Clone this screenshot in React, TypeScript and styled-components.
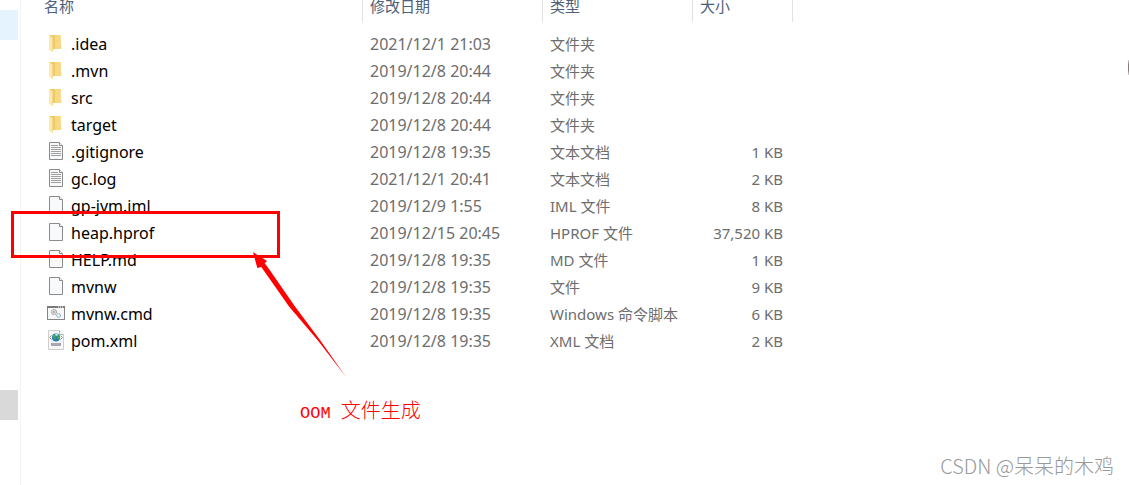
import React from "react";
import styled, { createGlobalStyle } from "styled-components";

const GlobalStyle = createGlobalStyle`
  * { box-sizing: border-box; }
  body {
    margin: 0;
    background: #fff;
    font-family: "Noto Sans", "Noto Sans CJK SC", sans-serif;
    overflow: hidden;
  }
`;

const Page = styled.div`
  position: relative;
  display: flex;
  min-height: 100vh;
`;

const Sidebar = styled.nav`
  display: flex;
  flex-direction: column;
  flex: none;
  gap: 350px;
  width: 21px;
  padding: 10px 2px 0 0;
  border-right: 1px solid #f3f3f3;
`;

const SideItem = styled.div<{ $tone: string }>`
  height: 30px;
  background: ${(p) => p.$tone};
`;

const Main = styled.main`
  flex: 1;
`;

const Table = styled.table`
  width: 772px;
  table-layout: fixed;
  border-collapse: separate;
  border-spacing: 0;
`;

const HeadCell = styled.th<{ $width: number; $indent?: number }>`
  width: ${(p) => p.$width}px;
  height: 22px;
  padding: 0 0 8px ${(p) => p.$indent ?? 7}px;
  border-right: 1px solid #e2e2e2;
  color: #4c607a;
  font-size: 15px;
  font-weight: 400;
  line-height: 12px;
  text-align: left;
  vertical-align: top;
`;

const Body = styled.tbody`
  &::before {
    content: "";
    display: block;
    height: 9px;
  }
`;

const Cell = styled.td`
  height: 27px;
  padding: 0 0 0 7px;
  color: #6d6d6d;
  font-size: 15px;
  line-height: 27px;
  white-space: nowrap;
`;

const NameCell = styled(Cell)`
  padding-left: 26px;
  color: #000;
  font-size: 16px;
`;

const DateCell = styled(Cell)`
  font-size: 16px;
`;

const SizeCell = styled(Cell)`
  padding-right: 10px;
  text-align: right;
`;

const FileLabel = styled.div`
  display: flex;
  align-items: center;
  gap: 6px;
  height: 27px;
`;

const Icon = styled.svg`
  flex: none;
  display: block;
  width: 18px;
  height: 23px;
`;

const Highlight = styled.div`
  position: absolute;
  left: 11px;
  top: 211px;
  width: 269px;
  height: 47px;
  border: 3px solid #f00;
`;

const Arrow = styled.svg`
  position: absolute;
  left: 250px;
  top: 250px;
  width: 100px;
  height: 130px;
`;

const Note = styled.div`
  position: absolute;
  left: 300px;
  top: 399px;
  color: #f00;
  font-family: "Liberation Mono", "Noto Sans CJK SC", monospace;
  font-size: 17px;
  font-weight: 300;
  line-height: 28px;
  white-space: pre;
`;

const NoteHan = styled.span`
  font-size: 20px;
`;

const Watermark = styled.div`
  position: absolute;
  right: 15px;
  bottom: 5px;
  color: #999;
  font-family: "Noto Sans CJK SC", sans-serif;
  font-size: 20px;
  font-weight: 300;
  line-height: 28px;
`;

const EdgeHandle = styled.div`
  position: absolute;
  right: 0;
  top: 60px;
  width: 1px;
  height: 15px;
  background: linear-gradient(#d8d4d4, #857b7b 30%, #857b7b 70%, #d8d4d4);
`;

type Kind = "folder" | "text" | "blank" | "script" | "xml";

function FileIcon({ kind }: { kind: Kind }) {
  if (kind === "folder") {
    return (
      <Icon viewBox="0 0 18 23" aria-hidden="true">
        <path d="M2.500 2h11v10.500h.7V16H5z" fill="#efc964" />
        <path d="M8 2h5.500v10.500h.7V16H8z" fill="#f7d983" />
        <path d="M2 2.200l4 2.300V19l-4-2z" fill="#fde9ab" />
        <path d="M5.500 4.500V18.500" stroke="#f5d88c" />
      </Icon>
    );
  }
  if (kind === "script") {
    return (
      <Icon viewBox="0 0 18 23" aria-hidden="true">
        <rect x=".5" y="3.500" width="17" height="13" fill="#f6f7f8" stroke="#868686" />
        <path d="M0 4h18" stroke="#7b7b7b" strokeWidth="2" />
        <path d="M11 4h1m1 0h1m1 0h1" stroke="#fff" />
        <circle cx="7" cy="9" r="2.600" fill="#ddd" stroke="#888" strokeDasharray="1.200 .6" />
        <circle cx="7" cy="9" r=".8" fill="#777" />
        <circle cx="11.500" cy="12.500" r="2" fill="#e0f0f7" stroke="#7d9fb0" strokeDasharray="1.200 .5" />
      </Icon>
    );
  }
  if (kind === "xml") {
    return (
      <Icon viewBox="0 0 18 23" aria-hidden="true">
        <path d="M1.500.5h11l4 4v15h-15z" fill="#f6f6f6" stroke="#cfcfcf" />
        <path d="M12.500.5v4h4" fill="#fff" stroke="#b5b5b5" />
        <circle cx="9" cy="7.500" r="4" fill="#2b78b9" />
        <path d="M6 5l3-1 1 2-2 1 1 3-2-1-1-2zM11 4l2 3-1 3-2-2z" fill="#3fab51" />
        <path d="M9 3.500l2 1-1 1.500-2-1z" fill="#c9efff" />
        <path d="M4.500 5.500l-2 2 2 2M13.500 5.500l2 2-2 2" fill="none" stroke="#8794a0" />
        <path d="M4 14.500h10" stroke="#a6a6b4" strokeWidth="3" />
      </Icon>
    );
  }
  return (
    <Icon viewBox="0 0 18 23" aria-hidden="true">
      <path d="M2.500 1.500h10l3 3v14h-13z" fill="#f8f9fa" stroke="#8b8b8b" />
      <path d="M12.500 1.500v3h3" fill="#fff" stroke="#8b8b8b" />
      {kind === "text" && (
        <path d="M4 4.500h7M4 6.500h10M4 8.500h10M4 10.500h10M4 12.500h10M4 14.500h10" stroke="#a0a0a0" />
      )}
    </Icon>
  );
}

const files: { name: string; kind: Kind; date: string; type: string; size: string }[] = [
  { name: ".idea", kind: "folder", date: "2021/12/1 21:03", type: "文件夹", size: "" },
  { name: ".mvn", kind: "folder", date: "2019/12/8 20:44", type: "文件夹", size: "" },
  { name: "src", kind: "folder", date: "2019/12/8 20:44", type: "文件夹", size: "" },
  { name: "target", kind: "folder", date: "2019/12/8 20:44", type: "文件夹", size: "" },
  { name: ".gitignore", kind: "text", date: "2019/12/8 19:35", type: "文本文档", size: "1 KB" },
  { name: "gc.log", kind: "text", date: "2021/12/1 20:41", type: "文本文档", size: "2 KB" },
  { name: "gp-jvm.iml", kind: "blank", date: "2019/12/9 1:55", type: "IML 文件", size: "8 KB" },
  { name: "heap.hprof", kind: "blank", date: "2019/12/15 20:45", type: "HPROF 文件", size: "37,520 KB" },
  { name: "HELP.md", kind: "blank", date: "2019/12/8 19:35", type: "MD 文件", size: "1 KB" },
  { name: "mvnw", kind: "blank", date: "2019/12/8 19:35", type: "文件", size: "9 KB" },
  { name: "mvnw.cmd", kind: "script", date: "2019/12/8 19:35", type: "Windows 命令脚本", size: "6 KB" },
  { name: "pom.xml", kind: "xml", date: "2019/12/8 19:35", type: "XML 文档", size: "2 KB" },
];

export default function App() {
  return (
    <>
      <GlobalStyle />
      <Page>
        <Sidebar>
          <SideItem $tone="#e5f3ff" />
          <SideItem $tone="#d9d9d9" />
        </Sidebar>
        <Main>
          <Table>
            <thead>
              <tr>
                <HeadCell $width={342} $indent={23}>名称</HeadCell>
                <HeadCell $width={180}>修改日期</HeadCell>
                <HeadCell $width={150}>类型</HeadCell>
                <HeadCell $width={100}>大小</HeadCell>
              </tr>
            </thead>
            <Body>
              {files.map((f) => (
                <tr key={f.name}>
                  <NameCell>
                    <FileLabel>
                      <FileIcon kind={f.kind} />
                      {f.name}
                    </FileLabel>
                  </NameCell>
                  <DateCell>{f.date}</DateCell>
                  <Cell>{f.type}</Cell>
                  <SizeCell>{f.size}</SizeCell>
                </tr>
              ))}
            </Body>
          </Table>
        </Main>
        <Highlight />
        <Arrow viewBox="0 0 100 130" aria-hidden="true">
          <path d="M3 2L17 11L14.700 13.300L19 19L45 56.500L70 90L96 127L67.500 90L39 56.500L11.300 17L7.300 18z" fill="#f00" />
        </Arrow>
        <Note>
          OOM <NoteHan>文件生成</NoteHan>
        </Note>
        <Watermark>CSDN @呆呆的木鸡</Watermark>
        <EdgeHandle />
      </Page>
    </>
  );
}
